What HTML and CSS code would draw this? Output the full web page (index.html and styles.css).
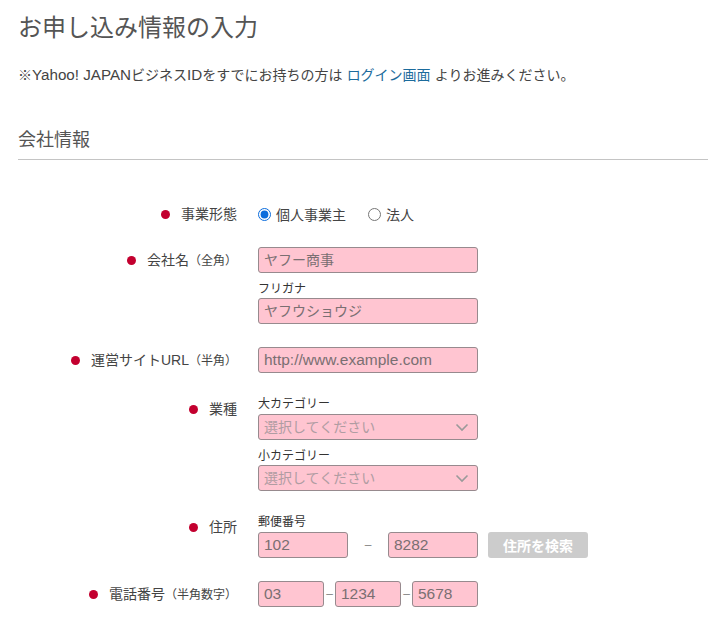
FILE: index.html
```html
<!DOCTYPE html>
<html lang="ja">
<head>
<meta charset="utf-8">
<title>お申し込み情報の入力</title>
<link rel="stylesheet" href="styles.css">
</head>
<body>
<div class="page">
  <h1 class="title">お申し込み情報の入力</h1>
  <p class="notice">※<span class="latin">Yahoo! JAPAN</span>ビジネス<span class="latin">ID</span>をすでにお持ちの方は<span class="latin"> </span><a class="link" href="#">ログイン画面</a><span class="latin"> </span>よりお進みください。</p>
  <h2 class="section-title">会社情報</h2>

  <form class="form">
    <div class="row row-radio">
      <div class="label"><span class="dot"></span><span class="label-text">事業形態</span></div>
      <div class="field radios">
        <label class="radio"><input type="radio" name="type" checked><span>個人事業主</span></label>
        <label class="radio"><input type="radio" name="type"><span>法人</span></label>
      </div>
    </div>

    <div class="row">
      <div class="label"><span class="dot"></span><span class="label-text">会社名<span class="small">（全角）</span></span></div>
      <div class="field">
        <div class="input w220">ヤフー商事</div>
        <div class="sublabel gap">フリガナ</div>
        <div class="input w220">ヤフウショウジ</div>
      </div>
    </div>

    <div class="row">
      <div class="label"><span class="dot"></span><span class="label-text">運営サイトURL<span class="small">（半角）</span></span></div>
      <div class="field">
        <div class="input latin-input w220">http://www.example.com</div>
      </div>
    </div>

    <div class="row">
      <div class="label"><span class="dot"></span><span class="label-text">業種</span></div>
      <div class="field">
        <div class="sublabel">大カテゴリー</div>
        <div class="input select w220">選択してください<svg class="chev" width="14" height="9" viewBox="0 0 14 9"><path d="M1.5 1.5 L7 7 L12.5 1.5" fill="none" stroke="#9a9a9a" stroke-width="1.6"/></svg></div>
        <div class="sublabel gap">小カテゴリー</div>
        <div class="input select w220">選択してください<svg class="chev" width="14" height="9" viewBox="0 0 14 9"><path d="M1.5 1.5 L7 7 L12.5 1.5" fill="none" stroke="#9a9a9a" stroke-width="1.6"/></svg></div>
      </div>
    </div>

    <div class="row">
      <div class="label"><span class="dot"></span><span class="label-text">住所</span></div>
      <div class="field">
        <div class="sublabel">郵便番号</div>
        <div class="inline">
          <div class="input latin-input w90">102</div>
          <span class="dash wide">–</span>
          <div class="input latin-input w90">8282</div>
          <button type="button" class="btn">住所を検索</button>
        </div>
      </div>
    </div>

    <div class="row">
      <div class="label"><span class="dot"></span><span class="label-text">電話番号<span class="small">（半角数字）</span></span></div>
      <div class="field">
        <div class="inline">
          <div class="input latin-input w66">03</div>
          <span class="dash">–</span>
          <div class="input latin-input w66">1234</div>
          <span class="dash">–</span>
          <div class="input latin-input w66">5678</div>
        </div>
      </div>
    </div>
  </form>
</div>
</body>
</html>
```

FILE: styles.css
```css
html, body {
  margin: 0;
  padding: 0;
  background: #fff;
}
body {
  font-family: "Liberation Sans", "Noto Sans CJK JP", sans-serif;
  color: #444;
}
.page {
  padding: 12px 0 0 18px;
}
.title {
  margin: 0;
  font-size: 24px;
  line-height: 32px;
  font-weight: normal;
  color: #555;
}
.notice {
  margin: 21px 0 0;
  font-size: 14px;
  line-height: 20px;
  color: #444;
}
.latin {
  font-size: 15.2px;
}
.link {
  color: #1b6b9c;
  text-decoration: none;
}
.section-title {
  margin: 43px 0 0;
  font-size: 18px;
  line-height: 24px;
  font-weight: normal;
  color: #555;
  padding-bottom: 7px;
  border-bottom: 1px solid #c4c4c4;
}
.form {
  margin-top: 41px;
}
.row {
  display: grid;
  grid-template-columns: 219px 1fr;
  column-gap: 21px;
  margin-bottom: 23px;
}
.row-radio {
  margin-bottom: 20px;
}
.label {
  display: flex;
  justify-content: flex-end;
  align-items: center;
  height: 26px;
  gap: 11px;
  font-size: 14px;
  color: #444;
  white-space: nowrap;
}
.dot {
  width: 9px;
  height: 9px;
  border-radius: 50%;
  background: #c3002f;
  flex: none;
}
.label-text {
  line-height: 26px;
}
.small {
  font-size: 12px;
}
.field {
  display: flex;
  flex-direction: column;
  align-items: flex-start;
}
.radios {
  flex-direction: row;
  align-items: center;
  height: 26px;
  gap: 22px;
}
.radio {
  display: flex;
  align-items: center;
  gap: 5px;
  font-size: 14px;
  color: #444;
}
.radio input {
  margin: 0;
  width: 13px;
  height: 13px;
  accent-color: #0a6cdc;
}
.sublabel {
  font-size: 12px;
  line-height: 16px;
  margin-bottom: 1px;
  color: #333;
}
.sublabel:first-child {
  line-height: 17px;
}
.sublabel.gap {
  margin-top: 8px;
}
.input {
  box-sizing: border-box;
  height: 26px;
  background: #ffc5d1;
  border: 1px solid #978a8e;
  border-radius: 3px;
  padding: 0 5px;
  font-size: 14px;
  line-height: 24px;
  color: #7a6f72;
  white-space: nowrap;
  overflow: hidden;
}
.latin-input {
  font-size: 15.5px;
}
.w220 { width: 220px; }
.w90 { width: 90px; }
.w66 { width: 66px; }
.select {
  position: relative;
  color: #b09ca2;
}
.chev {
  position: absolute;
  right: 8px;
  top: 8px;
}
.inline {
  display: flex;
  align-items: center;
}
.dash {
  width: 11px;
  text-align: center;
  font-size: 12px;
  color: #888;
}
.dash.wide {
  width: 40px;
}
.btn {
  margin-left: 10px;
  width: 100px;
  height: 26px;
  border: none;
  border-radius: 3px;
  background: #cccccc;
  color: #fff;
  font-family: "Liberation Sans", "Noto Sans CJK JP", sans-serif;
  font-size: 14px;
  font-weight: bold;
  padding: 0;
}
```
